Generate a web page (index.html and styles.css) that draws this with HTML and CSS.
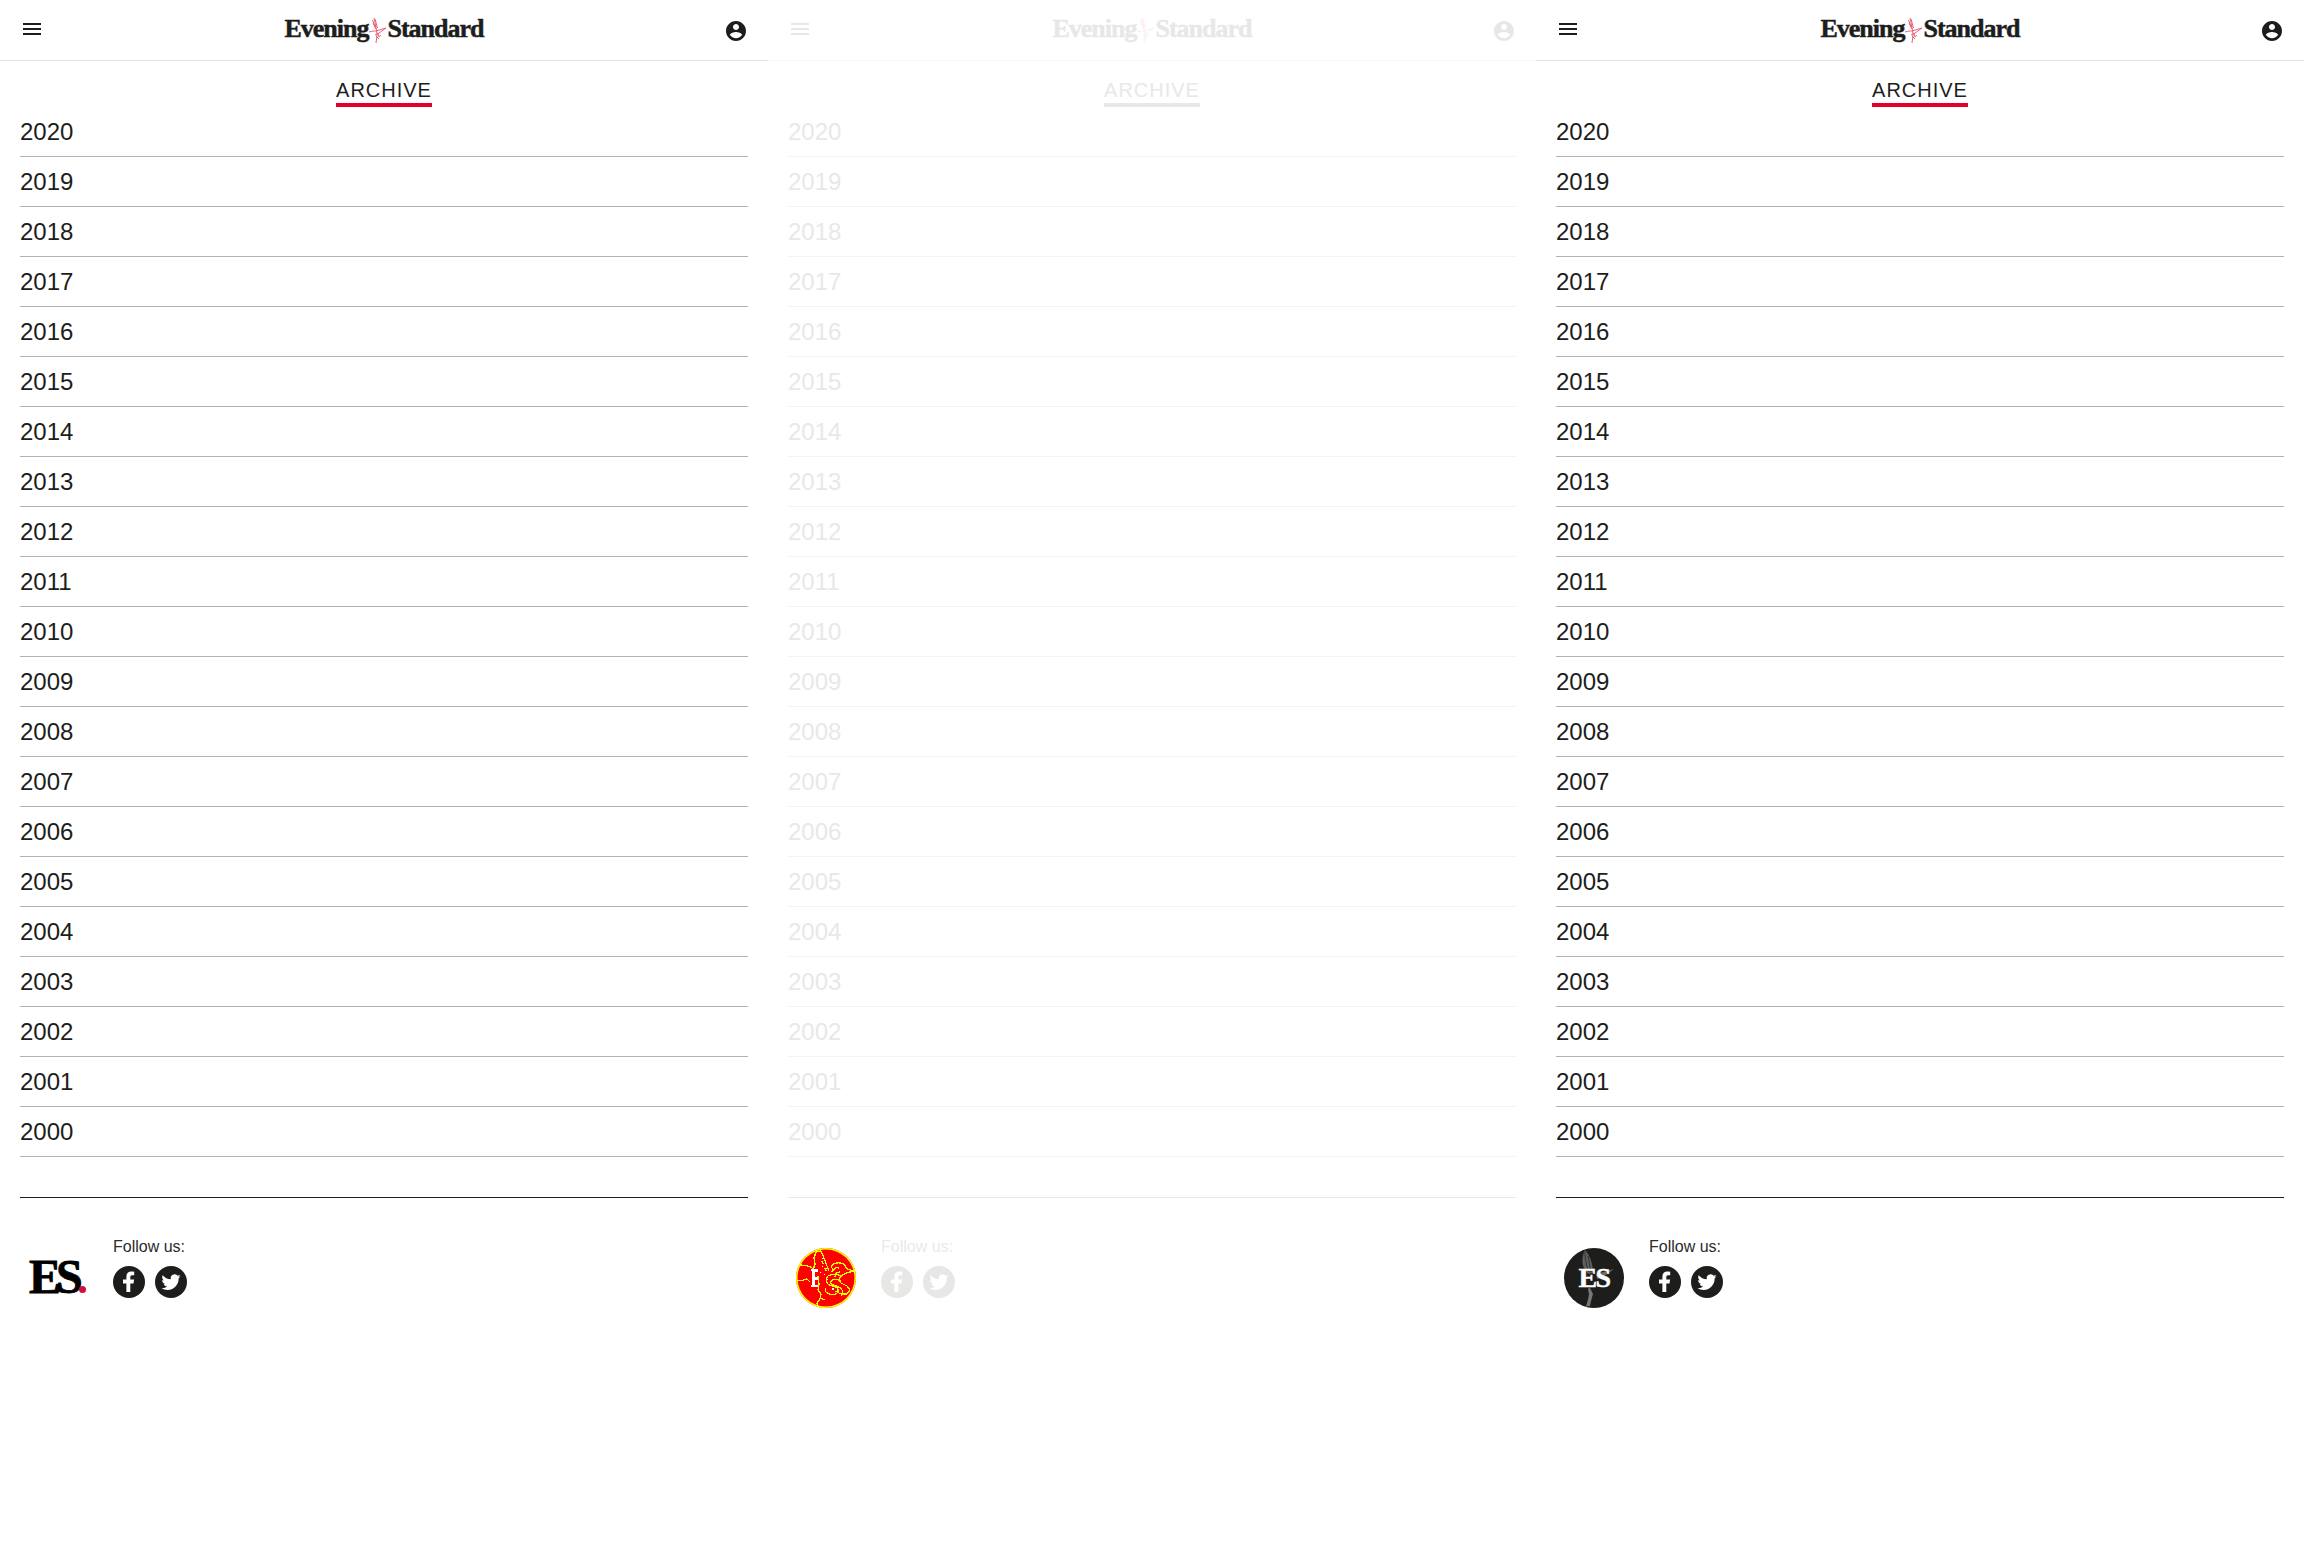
FILE: index.html
```html
<!DOCTYPE html>
<html lang="en">
<head>
<meta charset="utf-8">
<title>Archive</title>
<link rel="stylesheet" href="styles.css">
</head>
<body>
<svg class="defs" width="0" height="0" aria-hidden="true">
  <symbol id="i-menu" viewBox="0 0 24 24"><path d="M3 18h18v-2H3v2zm0-5h18v-2H3v2zm0-7v2h18V6H3z"/></symbol>
  <symbol id="i-user" viewBox="0 0 24 24"><path d="M12 2C6.48 2 2 6.48 2 12s4.48 10 10 10 10-4.48 10-10S17.52 2 12 2zm0 3c1.66 0 3 1.34 3 3s-1.34 3-3 3-3-1.34-3-3 1.34-3 3-3zm0 14.2c-2.5 0-4.71-1.28-6-3.22.03-1.99 4-3.08 6-3.08 1.99 0 5.97 1.09 6 3.08-1.29 1.94-3.5 3.22-6 3.22z"/></symbol>
  <symbol id="i-fairy" viewBox="0 0 17 26"><g fill="none" stroke="#e8506a" stroke-width=".9"><path d="M5 0l1.500 7 1 5 .5 5-1 8"/><path d="M3.500 2l3 8M6 1l2.500 9M4 5l3 6"/><path d="M0 14c3-1 5-1 7-1l10-3-7 5-4 2"/><path d="M9 15l1 4 2-2M7 18l3 3"/></g></symbol>
  <symbol id="i-fb" viewBox="0 0 32 32"><circle cx="16" cy="16" r="16"/><path fill="#fff" d="M13.400 26v-8.600H10v-4h3.400v-2.800c0-3.400 2-5 5-5 1.300 0 2.400.1 2.800.2v3.500h-2c-1.500 0-1.900.8-1.900 1.900v2.200h3.800l-.6 4h-3.200V26z"/></symbol>
  <symbol id="i-tw" viewBox="0 0 32 32"><circle cx="16" cy="16" r="16"/><g transform="translate(6.400 6.600) scale(.8)"><path fill="#fff" d="M23.953 4.57a10 10 0 01-2.825.775 4.958 4.958 0 002.163-2.723c-.951.555-2.005.959-3.127 1.184a4.92 4.92 0 00-8.384 4.482C7.69 8.095 4.067 6.13 1.64 3.162a4.822 4.822 0 00-.666 2.475c0 1.71.87 3.213 2.188 4.096a4.904 4.904 0 01-2.228-.616v.06a4.923 4.923 0 003.946 4.827 4.996 4.996 0 01-2.212.085 4.936 4.936 0 004.604 3.417 9.867 9.867 0 01-6.102 2.105c-.39 0-.779-.023-1.17-.067a13.995 13.995 0 007.557 2.209c9.053 0 13.998-7.496 13.998-13.985 0-.21 0-.42-.015-.63A9.935 9.935 0 0024 4.59z"/></g></symbol>
  <symbol id="i-wing" viewBox="0 0 60 60">
    <path fill="#5f5f5f" d="M21 2c-3 6-3.500 13-1 18l4 6 5-1c0-8-3-18-8-23z"/>
    <path fill="none" stroke="#2a2a2a" stroke-width=".8" d="M21 4c0 6 1 13 4 20M24 8c1 5 2 10 3 16"/>
    <path fill="#6a6a6a" d="M32 26l18-5-11 8-6 2z"/>
    <path fill="#777" d="M26 40l3 6-2 7-1 5-4 .5 2-7 1-5-1-6z"/>
  </symbol>
  <symbol id="i-wing-y" viewBox="0 0 60 60"><g fill="none" stroke="#ff0" stroke-width="1.300" shape-rendering="crispEdges"><path d="M20 4l-2 6 1 6-2 6M25 3l3 7 3 8 2 5"/><path d="M20 4l5-1M2 17c5 0 10 0 14 3l1 2M1 33c3 0 7-1 10-2l3 3"/><path d="M37 22l-2-4c3-3 8-4 13-2l3 5c2 1 5 1 7 2l-8 2-5 3-2 4 2 3 6 3 3 4-3 4h-6l-6-3"/><path d="M43 20c-3-1-6 1-7 4M44 24c-3 0-5 2-5 5"/><path d="M46 28c-6-2-11-2-14 0-3 3-2 7 1 9l7 2c3 1 3 5 0 7-4 1-8 0-10-2-1-1-1-3 0-4"/><path d="M45 33c-4-2-8-2-10 0-1 2 0 3 2 4l6 2c4 2 5 6 2 9"/><path d="M22 28l1 8-1 6 3 4-1 5-3 4 1 4 6 1M24 50l5 2"/><path d="M26 13l1 3M29 20l1 3"/></g><path fill="#fff" d="M15 21h7v3h-3v5h3v3h-3v5h3v2h-7v-2h1V23h-1z"/><path fill="#fff" d="M26 10h1v1h-1zM29 14h1v1h-1zM26 18h1v1h-1zM30 20h1v1h-1zM24 24h1v1h-1zM28 26h1v1h-1zM31 31h1v1h-1zM36 40h2v2h-2z"/></symbol>
</svg>

<main class="stage">

  <section class="panel">
    <header class="bar">
      <svg class="ico menu"><use href="#i-menu"/></svg>
      <a class="brand"><span>Evening</span><svg class="fairy"><use href="#i-fairy"/></svg><span>Standard</span></a>
      <svg class="ico user"><use href="#i-user"/></svg>
    </header>
    <div class="head"><h1 class="title">ARCHIVE</h1></div>
    <ul class="years">
      <li>2020</li><li>2019</li><li>2018</li><li>2017</li><li>2016</li><li>2015</li><li>2014</li><li>2013</li><li>2012</li><li>2011</li><li>2010</li><li>2009</li><li>2008</li><li>2007</li><li>2006</li><li>2005</li><li>2004</li><li>2003</li><li>2002</li><li>2001</li><li>2000</li>
    </ul>
    <footer class="foot">
      <div class="mark mark-text">ES<i class="dot"></i></div>
      <div class="follow">
        <p class="follow-label">Follow us:</p>
        <div class="socials"><svg class="soc"><use href="#i-fb"/></svg><svg class="soc"><use href="#i-tw"/></svg></div>
      </div>
    </footer>
  </section>

  <section class="panel faded">
    <header class="bar">
      <svg class="ico menu"><use href="#i-menu"/></svg>
      <a class="brand"><span>Evening</span><svg class="fairy"><use href="#i-fairy"/></svg><span>Standard</span></a>
      <svg class="ico user"><use href="#i-user"/></svg>
    </header>
    <div class="head"><h1 class="title">ARCHIVE</h1></div>
    <ul class="years">
      <li>2020</li><li>2019</li><li>2018</li><li>2017</li><li>2016</li><li>2015</li><li>2014</li><li>2013</li><li>2012</li><li>2011</li><li>2010</li><li>2009</li><li>2008</li><li>2007</li><li>2006</li><li>2005</li><li>2004</li><li>2003</li><li>2002</li><li>2001</li><li>2000</li>
    </ul>
    <footer class="foot">
      <div class="mark mark-red"><svg class="mark-art"><use href="#i-wing-y"/></svg></div>
      <div class="follow">
        <p class="follow-label">Follow us:</p>
        <div class="socials"><svg class="soc"><use href="#i-fb"/></svg><svg class="soc"><use href="#i-tw"/></svg></div>
      </div>
    </footer>
  </section>

  <section class="panel">
    <header class="bar">
      <svg class="ico menu"><use href="#i-menu"/></svg>
      <a class="brand"><span>Evening</span><svg class="fairy"><use href="#i-fairy"/></svg><span>Standard</span></a>
      <svg class="ico user"><use href="#i-user"/></svg>
    </header>
    <div class="head"><h1 class="title">ARCHIVE</h1></div>
    <ul class="years">
      <li>2020</li><li>2019</li><li>2018</li><li>2017</li><li>2016</li><li>2015</li><li>2014</li><li>2013</li><li>2012</li><li>2011</li><li>2010</li><li>2009</li><li>2008</li><li>2007</li><li>2006</li><li>2005</li><li>2004</li><li>2003</li><li>2002</li><li>2001</li><li>2000</li>
    </ul>
    <footer class="foot">
      <div class="mark mark-dark"><svg class="mark-art"><use href="#i-wing"/></svg><span class="mark-es">ES</span></div>
      <div class="follow">
        <p class="follow-label">Follow us:</p>
        <div class="socials"><svg class="soc"><use href="#i-fb"/></svg><svg class="soc"><use href="#i-tw"/></svg></div>
      </div>
    </footer>
  </section>

</main>
</body>
</html>
```

FILE: styles.css
```css
* { box-sizing: border-box; }

html, body { margin: 0; padding: 0; background: #fff; }

body {
  font-family: "Liberation Sans", Arial, sans-serif;
  color: #1d1d1b;
}

.defs { display: block; height: 0; }

.stage {
  display: grid;
  grid-template-columns: repeat(3, 768px);
  min-height: 1568px;
  align-items: start;
}

.panel { width: 768px; }

/* Header */
.bar {
  display: flex;
  justify-content: space-between;
  align-items: flex-start;
  height: 61px;
  padding: 0 20px;
  border-bottom: 1px solid #e3e3e3;
}

.ico { width: 24px; height: 24px; fill: #1d1d1b; flex: none; }
.menu { margin-top: 17px; }
.user { margin-top: 19px; }

.brand {
  display: flex;
  align-items: flex-start;
  height: 60px;
  padding-top: 14px;
  font-family: "Liberation Serif", serif;
  font-weight: 700;
  font-size: 26px;
  line-height: 30px;
  letter-spacing: -1px;
  color: #1d1d1b;
  -webkit-text-stroke: .5px #1d1d1b;
}

.fairy { width: 17px; height: 26px; margin: 4px 1px 0 1px; flex: none; }

/* Title */
.head { display: flex; justify-content: center; padding-top: 16px; }

.title {
  margin: 0;
  height: 30px;
  font-size: 20px;
  font-weight: 400;
  line-height: 26px;
  letter-spacing: 1px;
  border-bottom: 4px solid #e4002b;
}

/* Year list */
.years { list-style: none; margin: 0; padding: 0 20px 40px; }

.years li {
  height: 50px;
  padding-top: 11px;
  font-size: 24px;
  line-height: 28px;
  border-bottom: 1px solid #b3b3b3;
}

/* Footer */
.foot {
  display: flex;
  align-items: flex-start;
  gap: 25px;
  margin: 0 20px;
  padding: 50px 8px 0;
  border-top: 1px solid #1d1d1b;
}

.mark { width: 60px; height: 60px; flex: none; position: relative; }

.mark-text {
  padding-left: 1px;
  font-family: "Liberation Serif", serif;
  font-weight: 700;
  font-size: 48px;
  line-height: 58px;
  letter-spacing: -5px;
  -webkit-text-stroke: .9px #000;
  color: #000;
}

.dot {
  position: absolute;
  left: 51px;
  top: 38px;
  width: 7px;
  height: 7px;
  border-radius: 50%;
  background: #d0103a;
}

.mark-red {
  border-radius: 50%;
  background: #f00;
  box-shadow: inset 0 0 0 1.5px #ff0;
  overflow: hidden;
}

.mark-dark {
  border-radius: 50%;
  background: #1d1d1b;
  overflow: hidden;
}

.mark-art { position: absolute; inset: 0; width: 100%; height: 100%; }

.mark-es {
  position: absolute;
  inset: 0;
  text-align: center;
  font-family: "Liberation Serif", serif;
  font-weight: 700;
  font-size: 28px;
  line-height: 60px;
  letter-spacing: -1.500px;
  -webkit-text-stroke: .4px #fff;
  color: #fff;
}

.follow-label {
  margin: -10px 0 0;
  font-size: 16px;
  line-height: 18px;
  color: #2b2b2b;
}

.socials { display: flex; gap: 10px; margin-top: 10px; }

.soc { width: 32px; height: 32px; fill: #1d1d1b; flex: none; }

/* Faded middle panel: everything but the round mark */
.faded .bar { border-bottom-color: #f9f9f9; }
.faded .bar > *, .faded .follow { opacity: .1; }
.faded .title { color: #e8e8e8; border-bottom-color: #e8e8e8; }
.faded .years li { color: #e8e8e8; border-bottom-color: #f4f4f4; }
.faded .foot { border-top-color: #e8e8e8; }
```
